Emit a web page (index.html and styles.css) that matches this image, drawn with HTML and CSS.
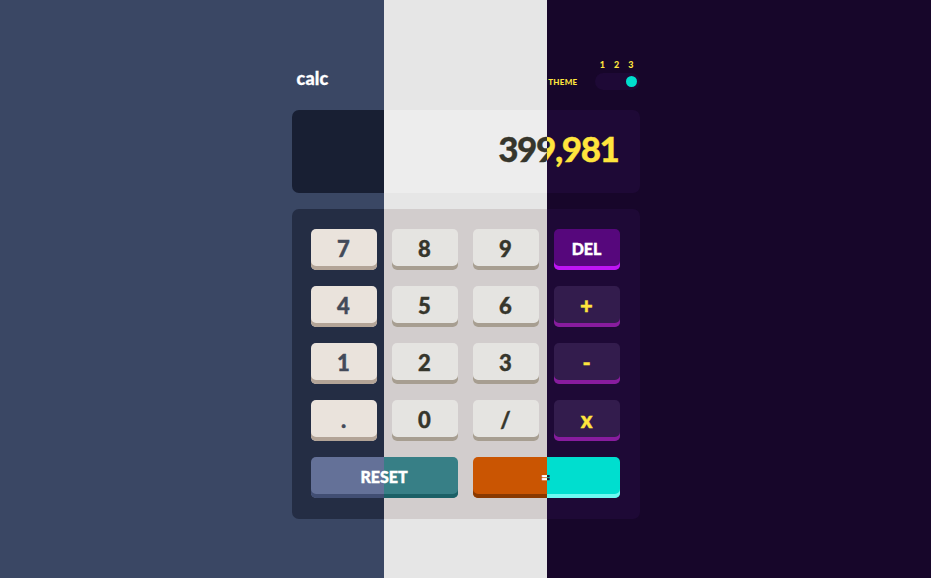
FILE: index.html
```html
<!DOCTYPE html>
<html lang="en">
<head>
<meta charset="utf-8">
<title>calc</title>
<link rel="stylesheet" href="styles.css">
</head>
<body>
<div class="stage">
  <section class="layer theme1">
    <main class="calc">
      <header class="head">
        <h1 class="logo">calc</h1>
        <div class="switcher">
          <div class="nums"><span>1</span><span>2</span><span>3</span></div>
          <div class="switch-row">
            <span class="label">THEME</span>
            <div class="track"><span class="knob"></span></div>
          </div>
        </div>
      </header>
      <div class="screen">399,981</div>
      <div class="keypad">
        <button class="key">7</button><button class="key">8</button><button class="key">9</button><button class="key key-fn">DEL</button>
        <button class="key">4</button><button class="key">5</button><button class="key">6</button><button class="key">+</button>
        <button class="key">1</button><button class="key">2</button><button class="key">3</button><button class="key">-</button>
        <button class="key">.</button><button class="key">0</button><button class="key">/</button><button class="key">x</button>
        <button class="key key-fn key-wide">RESET</button><button class="key key-eq key-wide">=</button>
      </div>
    </main>
  </section>
  <section class="layer theme2">
    <main class="calc">
      <header class="head">
        <h1 class="logo">calc</h1>
        <div class="switcher">
          <div class="nums"><span>1</span><span>2</span><span>3</span></div>
          <div class="switch-row">
            <span class="label">THEME</span>
            <div class="track"><span class="knob"></span></div>
          </div>
        </div>
      </header>
      <div class="screen">399,981</div>
      <div class="keypad">
        <button class="key">7</button><button class="key">8</button><button class="key">9</button><button class="key key-fn">DEL</button>
        <button class="key">4</button><button class="key">5</button><button class="key">6</button><button class="key">+</button>
        <button class="key">1</button><button class="key">2</button><button class="key">3</button><button class="key">-</button>
        <button class="key">.</button><button class="key">0</button><button class="key">/</button><button class="key">x</button>
        <button class="key key-fn key-wide">RESET</button><button class="key key-eq key-wide">=</button>
      </div>
    </main>
  </section>
  <section class="layer theme3">
    <main class="calc">
      <header class="head">
        <h1 class="logo">calc</h1>
        <div class="switcher">
          <div class="nums"><span>1</span><span>2</span><span>3</span></div>
          <div class="switch-row">
            <span class="label">THEME</span>
            <div class="track"><span class="knob"></span></div>
          </div>
        </div>
      </header>
      <div class="screen">399,981</div>
      <div class="keypad">
        <button class="key">7</button><button class="key">8</button><button class="key">9</button><button class="key key-fn">DEL</button>
        <button class="key">4</button><button class="key">5</button><button class="key">6</button><button class="key">+</button>
        <button class="key">1</button><button class="key">2</button><button class="key">3</button><button class="key">-</button>
        <button class="key">.</button><button class="key">0</button><button class="key">/</button><button class="key">x</button>
        <button class="key key-fn key-wide">RESET</button><button class="key key-eq key-wide">=</button>
      </div>
    </main>
  </section>
</div>
</body>
</html>
```
FILE: styles.css
```css
* { box-sizing: border-box; }
html, body { margin: 0; padding: 0; }
body { font-family: "Lato", "Liberation Sans", sans-serif; font-weight: 900; overflow: hidden; }

.stage { display: grid; width: 100vw; height: 100vh; }
.layer {
  grid-area: 1 / 1;
  display: flex;
  align-items: center;
  justify-content: center;
  height: 100vh;
  background: var(--bg);
}
.theme1 { clip-path: inset(0 547px 0 0); }
.theme2 { clip-path: inset(0 384px 0 384px); }
.theme3 { clip-path: inset(0 0 0 547px); }

.calc { width: 348px; display: flex; flex-direction: column; margin-top: 1px; }

.head { display: flex; justify-content: space-between; align-items: flex-end; height: 30px; }
.logo { margin: 0 0 2px 5px; font-size: 18px; font-weight: 900; line-height: 20px; color: var(--head); letter-spacing: 0.2px; -webkit-text-stroke: 0.3px currentColor; }
.switcher { display: flex; flex-direction: column; align-items: flex-end; }
.nums { display: flex; gap: 9px; padding-right: 6px; font-size: 9px; line-height: 10px; color: var(--head); }
.switch-row { display: flex; align-items: center; gap: 17px; margin-top: 3px; }
.label { font-size: 8px; letter-spacing: 0.3px; color: var(--head); margin-top: 1px; }
.track { width: 45px; height: 17px; border-radius: 9px; background: var(--keypad); display: flex; align-items: center; padding: 0 3px; justify-content: var(--knob-pos); }
.knob { width: 11px; height: 11px; border-radius: 50%; background: var(--eq); }

.screen {
  margin-top: 20px;
  height: 83px;
  border-radius: 7px;
  background: var(--screen);
  color: var(--screen-text);
  font-size: 35px;
  letter-spacing: -1.4px;
  -webkit-text-stroke: 0.3px currentColor;
  display: flex;
  align-items: center;
  justify-content: flex-end;
  padding: 0 21px 8px 0;
}

.keypad {
  margin-top: 16px;
  background: var(--keypad);
  border-radius: 7px;
  padding: 20px 20px 21px 19px;
  display: grid;
  grid-template-columns: repeat(4, 66px);
  grid-auto-rows: 41px;
  column-gap: 15px;
  row-gap: 16px;
}
.key {
  border: 0;
  margin: 0;
  padding: 0 0 3px;
  border-radius: 5px;
  font-family: inherit;
  font-weight: 900;
  font-size: 22px;
  -webkit-text-stroke: 0.4px currentColor;
  background: var(--key);
  color: var(--key-text);
  box-shadow: inset 0 -4px 0 var(--key-shadow);
}
.key-fn { background: var(--fn); box-shadow: inset 0 -4px 0 var(--fn-shadow); color: var(--fn-text); font-size: 16px; }
.key-eq { background: var(--eq); box-shadow: inset 0 -4px 0 var(--eq-shadow); color: var(--eq-text); font-size: 16px; }
.key-wide { grid-column: span 2; }

.theme1 {
  --bg: #3a4764; --head: #ffffff; --screen: #181f33; --screen-text: #ffffff; --keypad: #242d44;
  --key: #eae3dc; --key-shadow: #b3a497; --key-text: #434a59;
  --fn: #647198; --fn-shadow: #414e73; --fn-text: #ffffff;
  --eq: #d03f2f; --eq-shadow: #93261a; --eq-text: #ffffff; --knob-pos: flex-start;
}
.theme2 {
  --bg: #e6e6e6; --head: #36362c; --screen: #ededed; --screen-text: #36362c; --keypad: #d2cdcd;
  --key: #e5e4e1; --key-shadow: #a79e91; --key-text: #36362c;
  --fn: #377f86; --fn-shadow: #1b6066; --fn-text: #ffffff;
  --eq: #ca5502; --eq-shadow: #893901; --eq-text: #ffffff; --knob-pos: center;
}
.theme3 {
  --bg: #17062a; --head: #ffe53d; --screen: #1e0936; --screen-text: #ffe53d; --keypad: #1e0936;
  --key: #331c4d; --key-shadow: #881c9e; --key-text: #ffe53d;
  --fn: #56077c; --fn-shadow: #be15f4; --fn-text: #ffffff;
  --eq: #00decf; --eq-shadow: #6cf9f1; --eq-text: #1a2327; --knob-pos: flex-end;
}
```
